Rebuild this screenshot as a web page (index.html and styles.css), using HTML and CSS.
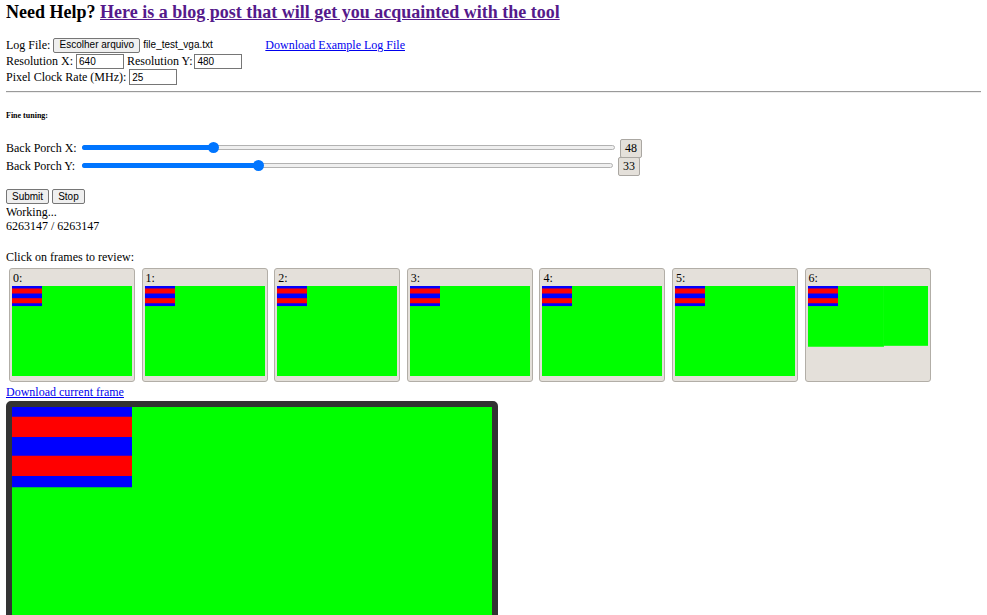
FILE: index.html
```html
<!DOCTYPE html>
<html>
<head>
<meta charset="utf-8">
<title>VGA Log Viewer</title>
<link rel="stylesheet" href="styles.css">
</head>
<body>
<h2 class="help">Need Help? <a class="visited" href="#">Here is a blog post that will get you acquainted with the tool</a></h2>

<div class="form">
  <div class="row">
    <span>Log File:</span>
    <span class="file-widget"><span class="btn file-btn">Escolher arquivo</span><span class="file-name">file_test_vga.txt</span></span>
    <a class="link example" href="#">Download Example Log File</a>
  </div>
  <div class="row">
    <span>Resolution X:</span>
    <input class="num res-x" type="text" value="640">
    <span class="lbl-y">Resolution Y:</span>
    <input class="num res-y" type="text" value="480">
  </div>
  <div class="row">
    <span>Pixel Clock Rate (MHz):</span>
    <input class="num clock" type="text" value="25">
  </div>
</div>

<div class="sep" role="separator"></div>

<h6 class="fine">Fine tuning:</h6>

<div class="slider-row">
  <span class="slider-label">Back Porch X:</span>
  <div class="slider slider-x"><div class="slider-fill" style="width: 24.6%"></div><div class="slider-thumb" style="left: 24.6%"></div></div>
  <output class="val">48</output>
</div>
<div class="slider-row">
  <span class="slider-label">Back Porch Y:</span>
  <div class="slider slider-y"><div class="slider-fill" style="width: 33.1%"></div><div class="slider-thumb" style="left: 33.1%"></div></div>
  <output class="val">33</output>
</div>

<div class="buttons">
  <button class="btn action">Submit</button>
  <button class="btn action stop">Stop</button>
</div>
<div class="status">
  <div>Working...</div>
  <div>6263147 / 6263147</div>
</div>
<div class="click">Click on frames to review:</div>

<div class="frames">
  <div class="card"><div class="card-label">0:</div>
    <svg class="thumb" viewBox="0 0 640 480" preserveAspectRatio="none"><rect width="640" height="480" fill="#00ff00"/><rect width="160" height="107" fill="#0000ff"/><rect y="13" width="160" height="27" fill="#ff0000"/><rect y="65" width="160" height="27" fill="#ff0000"/></svg></div>
  <div class="card"><div class="card-label">1:</div>
    <svg class="thumb" viewBox="0 0 640 480" preserveAspectRatio="none"><rect width="640" height="480" fill="#00ff00"/><rect width="160" height="107" fill="#0000ff"/><rect y="13" width="160" height="27" fill="#ff0000"/><rect y="65" width="160" height="27" fill="#ff0000"/></svg></div>
  <div class="card"><div class="card-label">2:</div>
    <svg class="thumb" viewBox="0 0 640 480" preserveAspectRatio="none"><rect width="640" height="480" fill="#00ff00"/><rect width="160" height="107" fill="#0000ff"/><rect y="13" width="160" height="27" fill="#ff0000"/><rect y="65" width="160" height="27" fill="#ff0000"/></svg></div>
  <div class="card"><div class="card-label">3:</div>
    <svg class="thumb" viewBox="0 0 640 480" preserveAspectRatio="none"><rect width="640" height="480" fill="#00ff00"/><rect width="160" height="107" fill="#0000ff"/><rect y="13" width="160" height="27" fill="#ff0000"/><rect y="65" width="160" height="27" fill="#ff0000"/></svg></div>
  <div class="card"><div class="card-label">4:</div>
    <svg class="thumb" viewBox="0 0 640 480" preserveAspectRatio="none"><rect width="640" height="480" fill="#00ff00"/><rect width="160" height="107" fill="#0000ff"/><rect y="13" width="160" height="27" fill="#ff0000"/><rect y="65" width="160" height="27" fill="#ff0000"/></svg></div>
  <div class="card"><div class="card-label">5:</div>
    <svg class="thumb" viewBox="0 0 640 480" preserveAspectRatio="none"><rect width="640" height="480" fill="#00ff00"/><rect width="160" height="107" fill="#0000ff"/><rect y="13" width="160" height="27" fill="#ff0000"/><rect y="65" width="160" height="27" fill="#ff0000"/></svg></div>
  <div class="card"><div class="card-label">6:</div>
    <svg class="thumb" viewBox="0 0 640 480" preserveAspectRatio="none"><rect width="405" height="324" fill="#00ff00"/><rect x="404" width="236" height="319" fill="#00ff00"/><rect width="160" height="107" fill="#0000ff"/><rect y="13" width="160" height="27" fill="#ff0000"/><rect y="65" width="160" height="27" fill="#ff0000"/></svg></div>
</div>

<a class="link download" href="#">Download current frame</a>

<div class="screen">
  <svg class="frame-big" viewBox="0 0 640 480" preserveAspectRatio="none"><rect width="640" height="480" fill="#00ff00"/><rect width="160" height="107" fill="#0000ff"/><rect y="13" width="160" height="27" fill="#ff0000"/><rect y="65" width="160" height="27" fill="#ff0000"/></svg>
</div>
</body>
</html>
```

FILE: styles.css
```css
html {
  background: #ffffff;
  overflow: hidden;
}
body {
  margin: 0 6px;
  font-family: "Liberation Serif", "Times New Roman", serif;
  font-size: 12px;
  line-height: 14px;
  color: #000000;
}
a {
  color: #0000ee;
  text-decoration: underline;
}
a.visited {
  color: #551a8b;
}
.help {
  margin: 2px 0 15px;
  font-size: 18px;
  line-height: 20px;
  font-weight: bold;
}
.form {
  display: flex;
  flex-direction: column;
}
.row {
  display: flex;
  align-items: center;
  height: 16px;
  white-space: nowrap;
}
.file-widget {
  display: flex;
  align-items: center;
  width: 209px;
  margin-left: 3px;
}
.btn {
  box-sizing: border-box;
  display: inline-flex;
  align-items: center;
  justify-content: center;
  height: 15px;
  padding: 0 5px;
  font-family: "Liberation Sans", Arial, sans-serif;
  font-size: 10px;
  color: #000000;
  background: #efefef;
  border: 1px solid #767676;
  border-radius: 2px;
}
.file-btn {
  width: 87px;
}
.file-name {
  margin-left: 3px;
  font-family: "Liberation Sans", Arial, sans-serif;
  font-size: 10px;
}
.example {
  margin-left: 3px;
}
.num {
  box-sizing: border-box;
  width: 48px;
  height: 15px;
  margin: 0 0 0 2px;
  padding: 0 2px;
  font-family: "Liberation Sans", Arial, sans-serif;
  font-size: 10px;
  border: 1px solid #767676;
  border-radius: 0;
  background: #ffffff;
  color: #000000;
  outline: none;
}
.res-x {
  margin-left: 3px;
}
.lbl-y {
  margin-left: 3px;
}
.res-y {
  margin-left: 2px;
}
.clock {
  margin-left: 3px;
  height: 16px;
}
.sep {
  height: 0;
  margin: 6px -6px 0 0;
  border-top: 1px solid #9a9a9a;
  border-bottom: 1px solid #eeeeee;
}
.fine {
  margin: 18px 0 0;
  font-size: 8px;
  line-height: 10px;
  font-weight: bold;
}
.slider-row {
  display: flex;
  align-items: center;
  height: 18px;
  white-space: nowrap;
}
.fine + .slider-row {
  margin-top: 18px;
}
.slider-label {
  width: 71px;
}
.slider {
  position: relative;
  box-sizing: border-box;
  height: 5px;
  margin: -2px 0 0 5px;
  background: #efefef;
  border: 1px solid #b2b2b2;
  border-radius: 3px;
}
.slider-x {
  width: 533px;
}
.slider-y {
  width: 531px;
}
.slider-fill {
  position: absolute;
  left: -1px;
  top: -1px;
  bottom: -1px;
  background: #0075ff;
  border-radius: 3px 0 0 3px;
}
.slider-thumb {
  position: absolute;
  top: 50%;
  width: 11px;
  height: 11px;
  margin: -5.5px 0 0 -5.5px;
  border-radius: 50%;
  background: #0075ff;
}
.val {
  box-sizing: border-box;
  display: inline-flex;
  align-items: center;
  justify-content: center;
  width: 22px;
  height: 19px;
  margin-left: 5px;
  background: #e4e0da;
  border: 1px solid #aaa7a2;
  border-radius: 2px;
  font-size: 12px;
}
.buttons {
  display: flex;
  gap: 3px;
  margin-top: 14px;
}
.action {
  height: 15px;
  padding: 0 5px;
}
.status {
  margin-top: 1px;
}
.click {
  margin-top: 17px;
}
.frames {
  display: flex;
  gap: 6.6px;
  margin: 4px 0 0 3px;
}
.card {
  box-sizing: border-box;
  width: 126px;
  padding: 2px 2px 5px;
  background: #e4e0da;
  border: 1px solid #b2aea7;
  border-radius: 3px;
}
.card-label {
  height: 15px;
  line-height: 15px;
  padding-left: 1px;
}
.thumb {
  display: block;
  width: 120px;
  height: 90px;
}
.download {
  display: inline-block;
  margin-top: 3px;
}
.screen {
  width: 480px;
  height: 360px;
  margin-top: 2px;
  border: 6px solid #333333;
  border-radius: 5px;
}
.frame-big {
  display: block;
  width: 480px;
  height: 360px;
}
```
